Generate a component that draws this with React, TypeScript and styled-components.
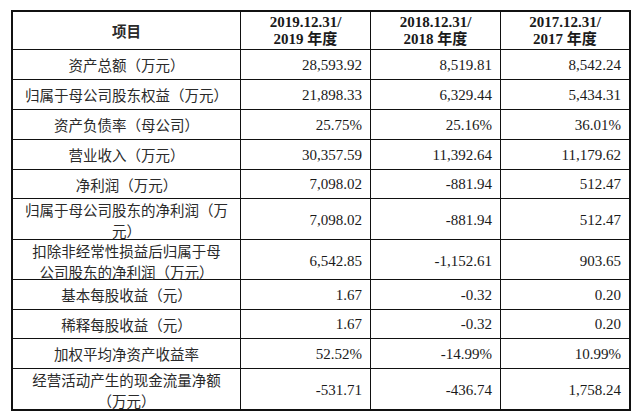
import React from "react";
import styled, { createGlobalStyle } from "styled-components";

const Global = createGlobalStyle`
  html, body { margin: 0; padding: 0; background: #fff; }
  body { font-family: "Liberation Serif", "Noto Sans CJK SC", serif; color: #1a1a1a; }
`;

const Page = styled.div`
  padding: 10px 0 0 11px;
`;

const Table = styled.div`
  width: 616px;
  border: 2px solid #111;
  display: flex;
  flex-direction: column;
`;

const Row = styled.div<{ $h: number; $last?: boolean }>`
  display: grid;
  grid-template-columns: 228px 130px 130px 128px;
  height: ${(p) => p.$h}px;
  box-sizing: border-box;
  border-bottom: ${(p) => (p.$last ? "none" : "1px solid #111")};
`;

const Cell = styled.div<{ $align?: "center" | "right"; $bold?: boolean; $last?: boolean }>`
  box-sizing: border-box;
  border-right: ${(p) => (p.$last ? "none" : "1px solid #111")};
  display: flex;
  flex-direction: column;
  justify-content: center;
  align-items: ${(p) => (p.$align === "right" ? "flex-end" : "center")};
  text-align: ${(p) => (p.$align === "right" ? "right" : "center")};
  padding: ${(p) => (p.$align === "right" ? "0 8px 0 4px" : "0 4px")};
  font-size: 15px;
  line-height: 18px;
  font-weight: ${(p) => (p.$bold ? 700 : 400)};
  white-space: nowrap;
`;

const LabelLine = styled.span<{ $bold?: boolean }>`
  display: block;
  font-family: "Noto Sans CJK SC", sans-serif;
  font-size: 14.5px;
  line-height: 21px;
  height: 21px;
  font-weight: ${(p) => (p.$bold ? 700 : 400)};
  color: #2a2a2a;
`;

const HeadLine = styled.span`
  display: block;
  line-height: 17px;
  height: 17px;
`;

type R = { label: string[]; v: [string, string, string]; h: number };

const rows: R[] = [
  { label: ["资产总额（万元）"], v: ["28,593.92", "8,519.81", "8,542.24"], h: 30 },
  { label: ["归属于母公司股东权益（万元）"], v: ["21,898.33", "6,329.44", "5,434.31"], h: 30 },
  { label: ["资产负债率（母公司）"], v: ["25.75%", "25.16%", "36.01%"], h: 30 },
  { label: ["营业收入（万元）"], v: ["30,357.59", "11,392.64", "11,179.62"], h: 30 },
  { label: ["净利润（万元）"], v: ["7,098.02", "-881.94", "512.47"], h: 29 },
  { label: ["归属于母公司股东的净利润（万", "元）"], v: ["7,098.02", "-881.94", "512.47"], h: 41 },
  { label: ["扣除非经常性损益后归属于母", "公司股东的净利润（万元）"], v: ["6,542.85", "-1,152.61", "903.65"], h: 40 },
  { label: ["基本每股收益（元）"], v: ["1.67", "-0.32", "0.20"], h: 30 },
  { label: ["稀释每股收益（元）"], v: ["1.67", "-0.32", "0.20"], h: 29 },
  { label: ["加权平均净资产收益率"], v: ["52.52%", "-14.99%", "10.99%"], h: 30 },
  { label: ["经营活动产生的现金流量净额", "（万元）"], v: ["-531.71", "-436.74", "1,758.24"], h: 40 },
];

const years = ["2019", "2018", "2017"];

export default function App() {
  return (
    <>
      <Global />
      <Page>
        <Table>
          <Row $h={38}>
            <Cell $bold>
              <LabelLine $bold>项目</LabelLine>
            </Cell>
            {years.map((y, i) => (
              <Cell key={y} $bold $last={i === 2}>
                <HeadLine>{y}.12.31/</HeadLine>
                <HeadLine>{y} 年度</HeadLine>
              </Cell>
            ))}
          </Row>
          {rows.map((r, ri) => (
            <Row key={ri} $h={r.h} $last={ri === rows.length - 1}>
              <Cell>
                {r.label.map((l, li) => (
                  <LabelLine key={li}>{l}</LabelLine>
                ))}
              </Cell>
              {r.v.map((val, i) => (
                <Cell key={i} $align="right" $last={i === 2}>
                  {val}
                </Cell>
              ))}
            </Row>
          ))}
        </Table>
      </Page>
    </>
  );
}
